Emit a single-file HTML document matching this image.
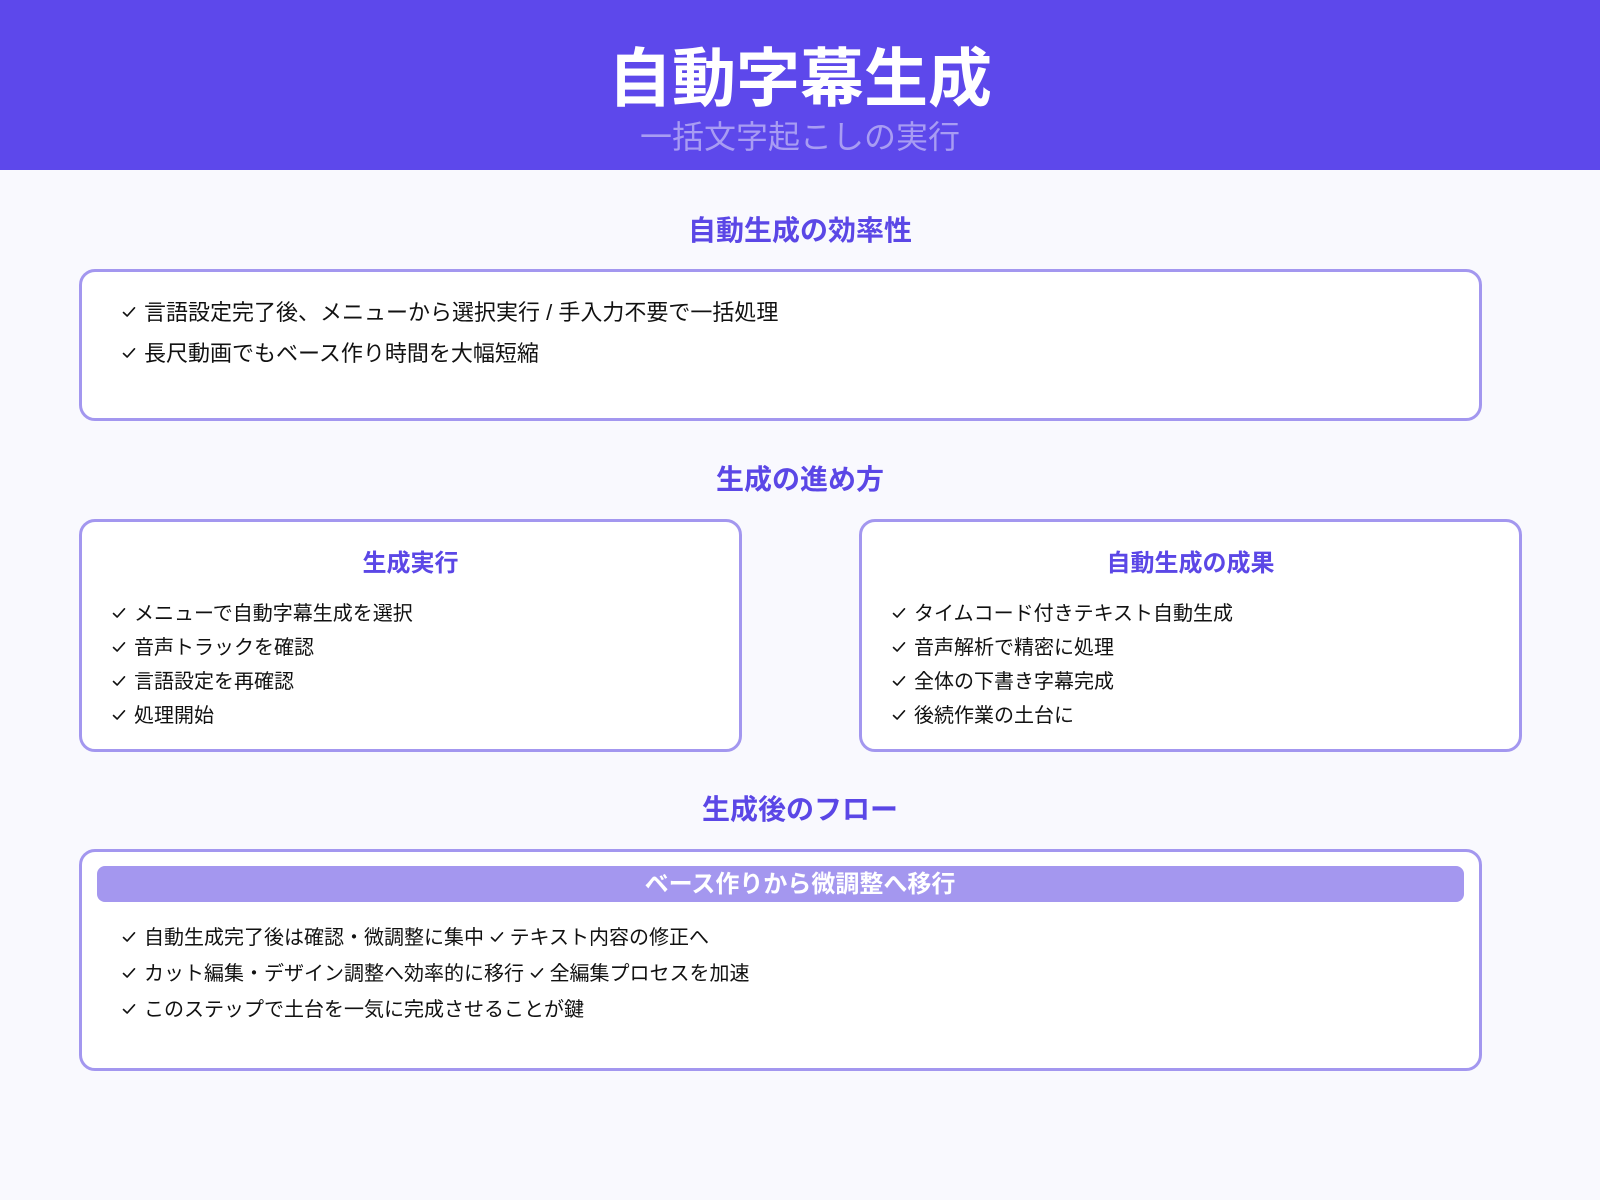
<!DOCTYPE html>
<html><head><meta charset="utf-8"><style>
*{margin:0;padding:0;box-sizing:border-box}
body{width:1600px;height:1200px;background:#f9f9fe;font-family:"Liberation Sans","Noto Sans CJK JP",sans-serif;position:relative;overflow:hidden;color:#111}
.hdr{position:absolute;left:0;top:0;width:1600px;height:170px;background:#5d48eb;text-align:center}
.hdr h1{position:absolute;left:0;right:0;top:41px;font-size:64px;line-height:76px;color:#fff;font-weight:700}
.hdr p{position:absolute;left:0;right:0;top:117px;font-size:32px;line-height:40px;color:#a89cf3}
.st{position:absolute;left:0;width:1600px;text-align:center;color:#5b47e6;font-weight:700;font-size:28px;line-height:34px}
.box{position:absolute;border:3px solid #a397ef;border-radius:16px;background:#fff}
.it{position:absolute;font-size:20px;line-height:28px;white-space:nowrap}
.big{font-size:22px}
.ck{display:inline-block;width:14px;height:12px;margin-right:8px;vertical-align:middle;position:relative;top:-2px}
.ct{position:absolute;left:0;right:0;text-align:center;color:#5b47e6;font-weight:700;font-size:24px;line-height:30px}
.ban{position:absolute;left:97px;top:866px;width:1367px;height:36px;background:#a497ef;border-radius:8px}
.bant{position:absolute;left:0;width:1600px;top:867px;color:#fff;font-weight:700;font-size:24px;line-height:36px;text-align:center}
</style></head><body>
<svg width="0" height="0" style="position:absolute"><defs><symbol id="c" viewBox="0 0 14 12"><path d="M1.5 6.5 L5.2 10 L12.5 1.8" fill="none" stroke="#111" stroke-width="1.6" stroke-linecap="round" stroke-linejoin="round"/></symbol></defs></svg>
<div class="hdr"><h1>自動字幕生成</h1><p>一括文字起こしの実行</p></div>
<div class="st" style="top:214px">自動生成の効率性</div>
<div class="box" style="left:79px;top:269px;width:1403px;height:152px"></div>
<div class="it big" style="left:122px;top:299px"><svg class="ck"><use href="#c"/></svg>言語設定完了後、メニューから選択実行 / 手入力不要で一括処理</div>
<div class="it big" style="left:122px;top:340px"><svg class="ck"><use href="#c"/></svg>長尺動画でもベース作り時間を大幅短縮</div>
<div class="st" style="top:463px">生成の進め方</div>
<div class="box" style="left:79px;top:519px;width:663px;height:233px"><div class="ct" style="top:27px">生成実行</div></div>
<div class="box" style="left:859px;top:519px;width:663px;height:233px"><div class="ct" style="top:27px">自動生成の成果</div></div>
<div class="it" style="left:112px;top:600px"><svg class="ck"><use href="#c"/></svg>メニューで自動字幕生成を選択</div>
<div class="it" style="left:112px;top:634px"><svg class="ck"><use href="#c"/></svg>音声トラックを確認</div>
<div class="it" style="left:112px;top:668px"><svg class="ck"><use href="#c"/></svg>言語設定を再確認</div>
<div class="it" style="left:112px;top:702px"><svg class="ck"><use href="#c"/></svg>処理開始</div>
<div class="it" style="left:892px;top:600px"><svg class="ck"><use href="#c"/></svg>タイムコード付きテキスト自動生成</div>
<div class="it" style="left:892px;top:634px"><svg class="ck"><use href="#c"/></svg>音声解析で精密に処理</div>
<div class="it" style="left:892px;top:668px"><svg class="ck"><use href="#c"/></svg>全体の下書き字幕完成</div>
<div class="it" style="left:892px;top:702px"><svg class="ck"><use href="#c"/></svg>後続作業の土台に</div>
<div class="st" style="top:793px">生成後のフロー</div>
<div class="box" style="left:79px;top:849px;width:1403px;height:222px"></div>
<div class="ban"></div><div class="bant">ベース作りから微調整へ移行</div>
<div class="it" style="left:122px;top:924px"><svg class="ck"><use href="#c"/></svg>自動生成完了後は確認・微調整に集中 <svg class="ck" style="margin-right:6px"><use href="#c"/></svg>テキスト内容の修正へ</div>
<div class="it" style="left:122px;top:960px"><svg class="ck"><use href="#c"/></svg>カット編集・デザイン調整へ効率的に移行 <svg class="ck" style="margin-right:6px"><use href="#c"/></svg>全編集プロセスを加速</div>
<div class="it" style="left:122px;top:996px"><svg class="ck"><use href="#c"/></svg>このステップで土台を一気に完成させることが鍵</div>
</body></html>
